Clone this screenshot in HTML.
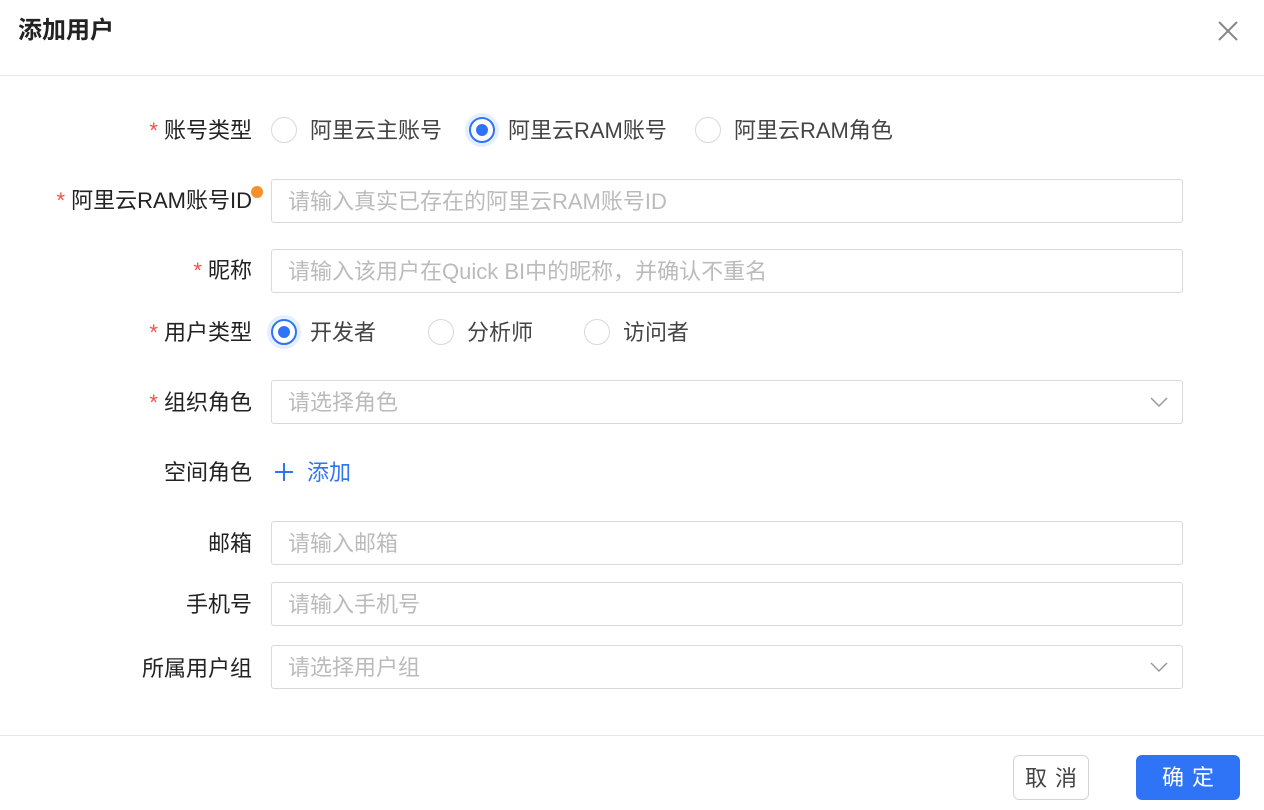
<!DOCTYPE html><html><head><meta charset="utf-8"><style>
body{margin:0;width:1264px;height:810px;background:#fff;position:relative;overflow:hidden;font-family:"Liberation Sans","Noto Sans CJK SC",sans-serif;color:#333}
.a{position:absolute;white-space:nowrap}
.t{left:18px;top:13px;font-size:24px;font-weight:bold;color:#222;line-height:36px}
.hl{left:0;width:1264px;top:75px;height:1px;background:#e8e8e8}
.fl{left:0;width:1264px;top:735px;height:1px;background:#e8e8e8}
.lb{font-size:22px;color:#222;line-height:30px;text-align:right;right:1012px}
.lb s{text-decoration:none;color:#f5504a;margin-right:6px}
.in{left:271px;width:910px;height:42px;border:1px solid #d9d9d9;border-radius:3px;font-size:22px;color:#bbb;line-height:44px;box-sizing:content-box;text-indent:16px}
.r{width:26px;height:26px;border:1px solid #d9d9d9;border-radius:50%;box-sizing:border-box;}
.r.on{border:2px solid #2f74f6;box-shadow:0 0 0 4px #e6efff}
.r.on:after{content:"";position:absolute;left:5px;top:5px;width:12px;height:12px;border-radius:50%;background:#2f74f6}
.rt{font-size:22px;color:#444;line-height:30px}
.chev{position:absolute;right:14px;top:14px}
.btn{height:45px;border-radius:6px;font-size:22px;line-height:45px;text-align:center;letter-spacing:8px;text-indent:8px;box-sizing:border-box}
</style></head><body>
<div class="a t">添加用户</div>
<svg class="a" style="left:1218px;top:21px" width="20" height="20"><path d="M1 1L19 19M19 1L1 19" stroke="#888" stroke-width="2"/></svg>
<div class="a hl"></div>

<div class="a lb" style="top:116px"><s>*</s>账号类型</div>
<div class="a r" style="left:271px;top:117px"></div><div class="a rt" style="left:310px;top:116px">阿里云主账号</div>
<div class="a r on" style="left:469px;top:117px"></div><div class="a rt" style="left:508px;top:116px">阿里云RAM账号</div>
<div class="a r" style="left:695px;top:117px"></div><div class="a rt" style="left:734px;top:116px">阿里云RAM角色</div>

<div class="a lb" style="top:186px;right:1012px"><s>*</s>阿里云RAM账号ID</div>
<div class="a" style="left:251px;top:186px;width:12px;height:12px;border-radius:50%;background:#f7902a"></div>
<div class="a in" style="top:179px">请输入真实已存在的阿里云RAM账号ID</div>

<div class="a lb" style="top:256px"><s>*</s>昵称</div>
<div class="a in" style="top:249px">请输入该用户在Quick BI中的昵称，并确认不重名</div>

<div class="a lb" style="top:318px"><s>*</s>用户类型</div>
<div class="a r on" style="left:271px;top:319px"></div><div class="a rt" style="left:310px;top:318px">开发者</div>
<div class="a r" style="left:428px;top:319px"></div><div class="a rt" style="left:467px;top:318px">分析师</div>
<div class="a r" style="left:584px;top:319px"></div><div class="a rt" style="left:623px;top:318px">访问者</div>

<div class="a lb" style="top:388px"><s>*</s>组织角色</div>
<div class="a in" style="top:380px">请选择角色<svg class="chev" width="18" height="14"><path d="M1 3L9 11L17 3" fill="none" stroke="#999" stroke-width="1.5"/></svg></div>

<div class="a lb" style="top:458px">空间角色</div>
<svg class="a" style="left:274px;top:462px" width="20" height="20"><path d="M10 1V19M1 10H19" stroke="#2f74f6" stroke-width="2"/></svg>
<div class="a rt" style="left:307px;top:458px;color:#2f74f6">添加</div>

<div class="a lb" style="top:529px">邮箱</div>
<div class="a in" style="top:521px">请输入邮箱</div>
<div class="a lb" style="top:590px">手机号</div>
<div class="a in" style="top:582px">请输入手机号</div>
<div class="a lb" style="top:654px">所属用户组</div>
<div class="a in" style="top:645px">请选择用户组<svg class="chev" width="18" height="14"><path d="M1 3L9 11L17 3" fill="none" stroke="#999" stroke-width="1.5"/></svg></div>

<div class="a fl"></div>
<div class="a btn" style="left:1013px;top:755px;width:76px;border:1px solid #d4d4d4;color:#444">取消</div>
<div class="a btn" style="left:1136px;top:755px;width:104px;background:#2f74f6;color:#fff">确定</div>
</body></html>
